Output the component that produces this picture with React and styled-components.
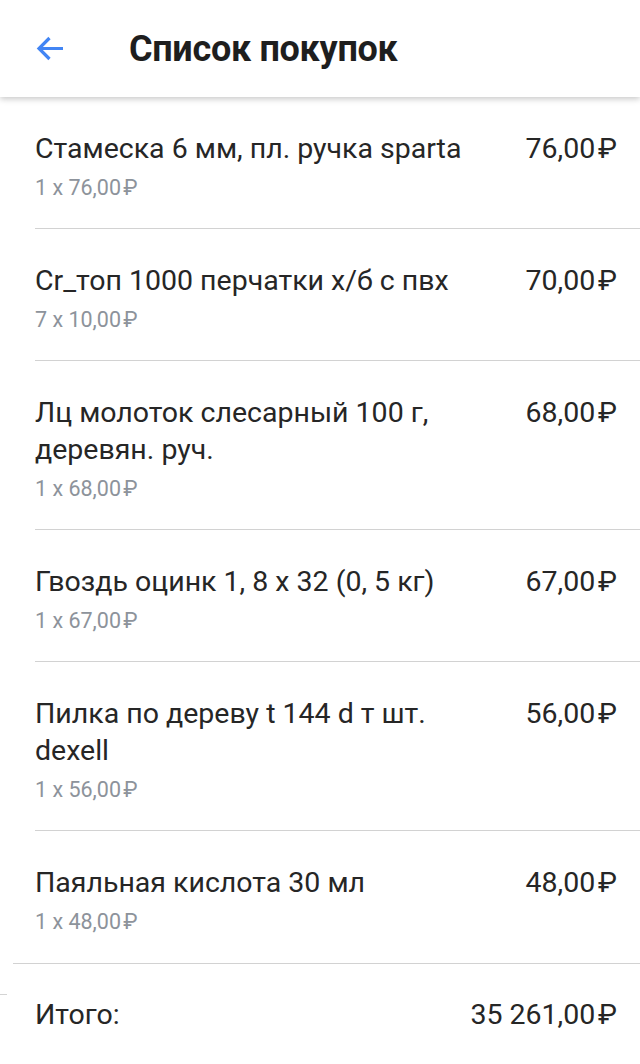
import React from 'react'
import styled, { createGlobalStyle } from 'styled-components'

const items = [
  { name: 'Стамеска 6 мм, пл. ручка sparta', qty: 1, price: '76,00', total: '76,00' },
  { name: 'Cr_топ 1000 перчатки х/б с пвх', qty: 7, price: '10,00', total: '70,00' },
  { name: 'Лц молоток слесарный 100 г, деревян. руч.', qty: 1, price: '68,00', total: '68,00' },
  { name: 'Гвоздь оцинк 1, 8 х 32 (0, 5 кг)', qty: 1, price: '67,00', total: '67,00' },
  { name: 'Пилка по дереву t 144 d т шт. dexell', qty: 1, price: '56,00', total: '56,00' },
  { name: 'Паяльная кислота 30 мл', qty: 1, price: '48,00', total: '48,00' },
]

function App() {
  return (
    <Page>
      <GlobalStyle />
      <Header>
        <BackButton>
          <svg width="30" height="30" viewBox="0 0 30 30">
            <path d="M28 14.5H6 M14.5 4 L4 14.5 L14.5 25" stroke="#4285f4" strokeWidth="3.2" fill="none" />
          </svg>
        </BackButton>
        <Title>Список покупок</Title>
      </Header>

      <List>
        {items.map((item, i) => (
          <Row key={i}>
            <Info>
              <Name>{item.name}</Name>
              <Sub>{item.qty} x {item.price}&#8202;₽</Sub>
            </Info>
            <Price>{item.total}&#8202;₽</Price>
          </Row>
        ))}
      </List>

      <Footer>
        <Tick />
        <TotalLabel>Итого:</TotalLabel>
        <TotalValue>35 261,00&#8202;₽</TotalValue>
      </Footer>
    </Page>
  )
}

export default App

const GlobalStyle = createGlobalStyle`
  body {
    margin: 0;
    background: #fff;
    font-family: Roboto, "Noto Sans", sans-serif;
  }
`

const Page = styled.div`
  width: 640px;
  height: 1064px;
  overflow: hidden;
  display: flex;
  flex-direction: column;
  background: #fff;
`

const Header = styled.div`
  height: 97px;
  flex-shrink: 0;
  display: flex;
  align-items: center;
  background: #fff;
  box-shadow: 0 2px 6px rgba(0, 0, 0, 0.22);
  position: relative;
  z-index: 1;
`

const BackButton = styled.div`
  width: 129px;
  padding-left: 35px;
  box-sizing: border-box;
  display: flex;
  align-items: center;
  svg {
    display: block;
  }
`

const Title = styled.div`
  font-size: 36px;
  font-weight: 700;
  color: #1e1e1e;
  letter-spacing: -0.3px;
`

const List = styled.div`
  display: flex;
  flex-direction: column;
`

const Row = styled.div`
  display: flex;
  justify-content: space-between;
  align-items: flex-start;
  margin-left: 35px;
  padding: 33px 23px 27px 0;
  border-bottom: 1px solid #d2d2d2;
  &:last-child {
    border-bottom: none;
    padding-bottom: 28px;
  }
`

const Info = styled.div`
  max-width: 470px;
`

const Name = styled.div`
  font-size: 28.5px;
  line-height: 37px;
  color: #262626;
`

const Sub = styled.div`
  margin-top: 8px;
  font-size: 21.5px;
  line-height: 26px;
  color: #8d939b;
`

const Price = styled.div`
  font-size: 28.5px;
  line-height: 37px;
  color: #262626;
  white-space: nowrap;
`

const Footer = styled.div`
  position: relative;
  flex: 1;
  display: flex;
  justify-content: space-between;
  align-items: center;
  margin-left: 13px;
  border-top: 1.5px solid #d2d2d2;
  padding: 0 23px 0 22px;
`

const Tick = styled.div`
  position: absolute;
  left: -13px;
  top: 30px;
  width: 7px;
  height: 1px;
  background: #d4d4d4;
`

const TotalLabel = styled.div`
  font-size: 28.5px;
  color: #262626;
`

const TotalValue = styled.div`
  font-size: 28.5px;
  color: #262626;
`
